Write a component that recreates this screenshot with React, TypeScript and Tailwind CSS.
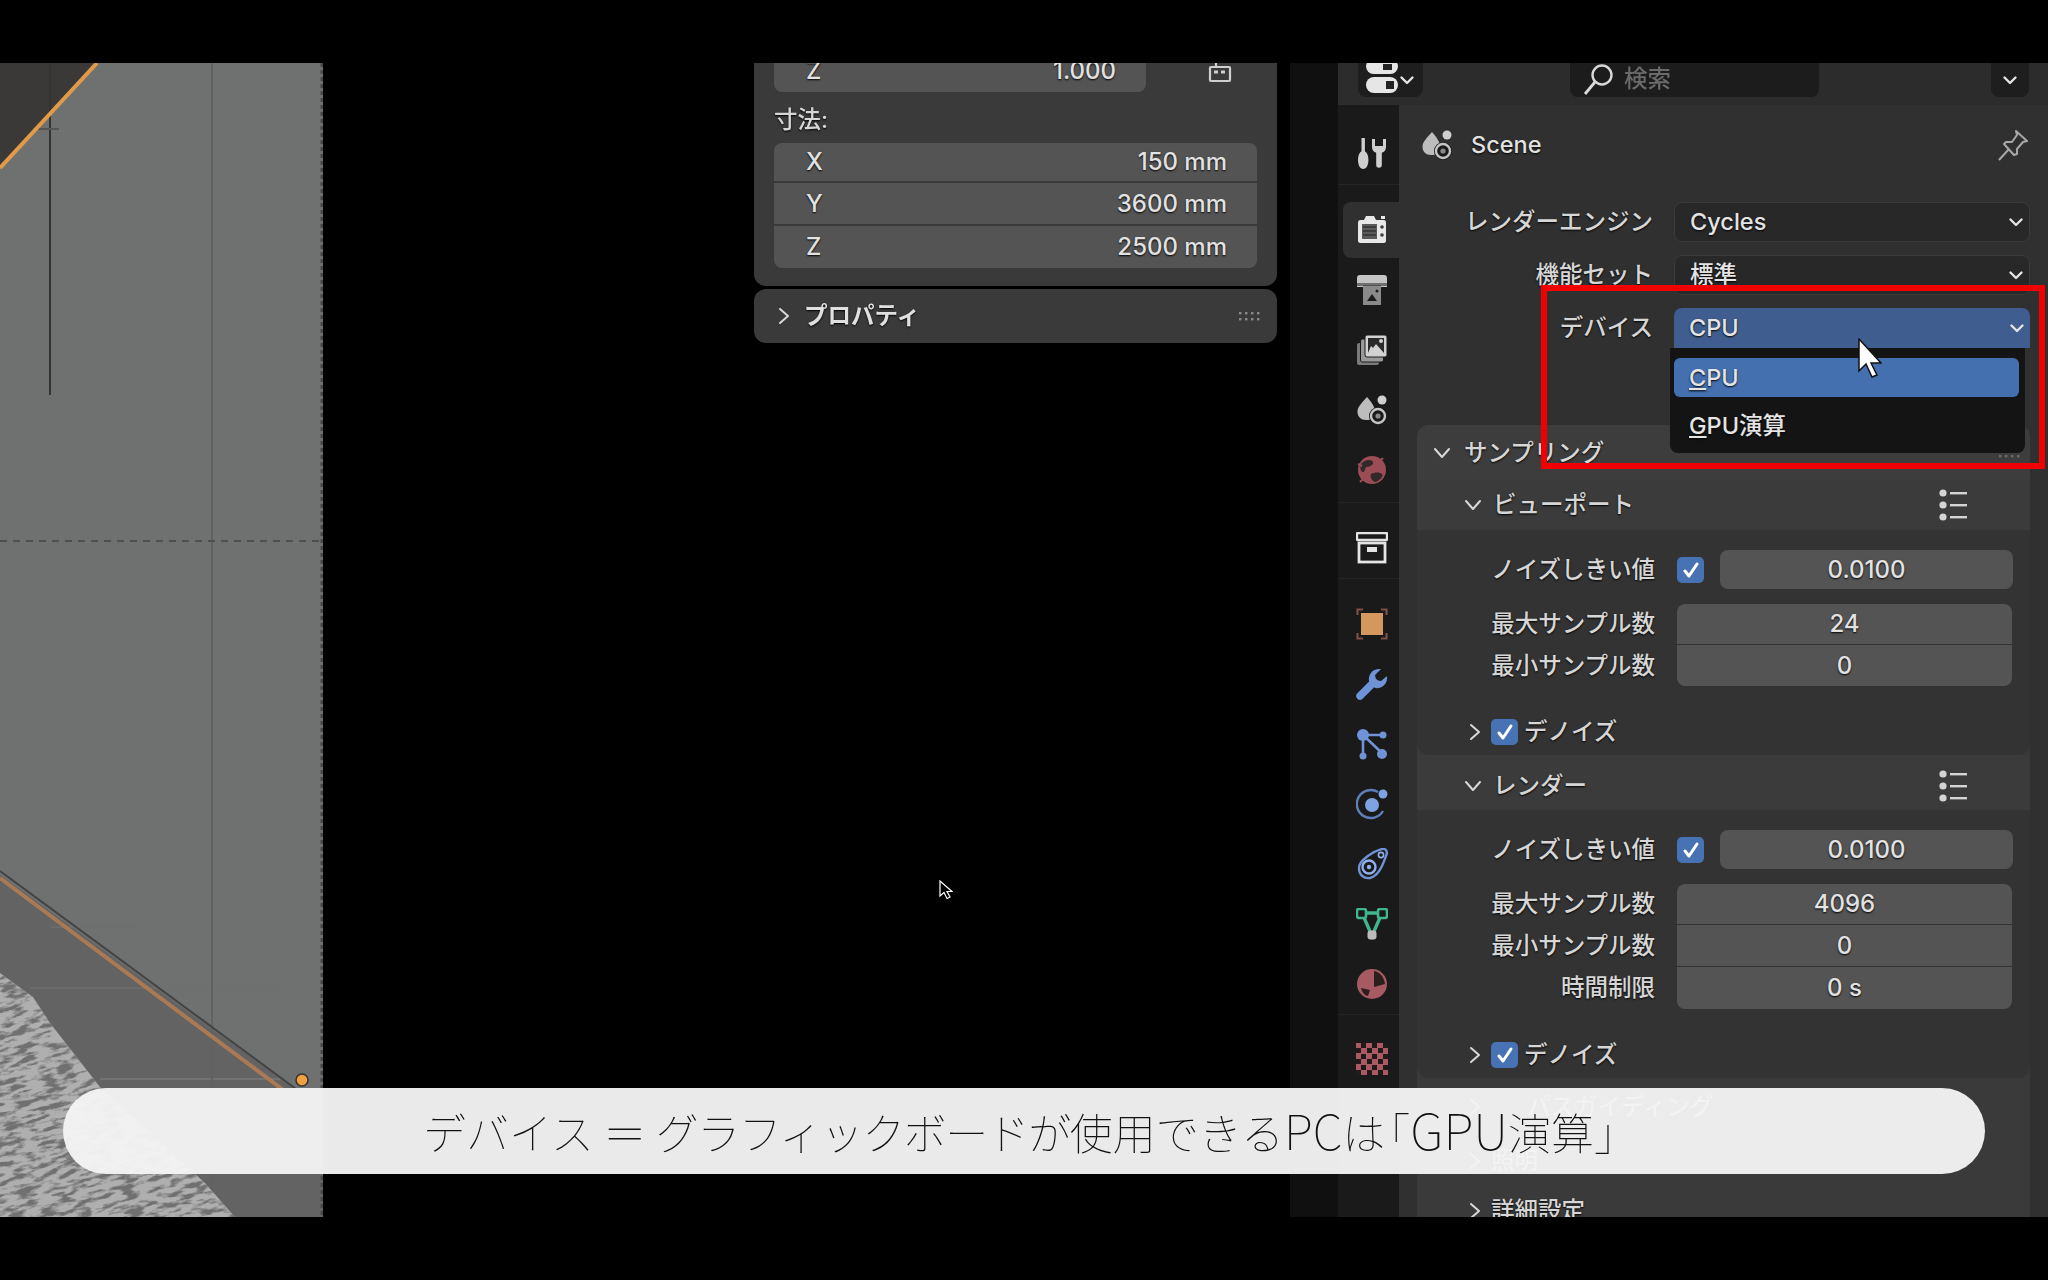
import React from "react";

const shadow = "[text-shadow:0_1px_2px_#000]";

// --- small widgets ---
function Chevron({ open = true, className = "" }: { open?: boolean; className?: string }) {
  return (
    <svg viewBox="0 0 20 20" className={`w-5 h-5 shrink-0 ${className}`} fill="none" stroke="#d8d8d8" strokeWidth="2" strokeLinecap="round" strokeLinejoin="round">
      {open ? <path d="M3 6l7 8 7-8" /> : <path d="M6 3l8 7-8 7" />}
    </svg>
  );
}

function SmallDown({ className = "" }: { className?: string }) {
  return (
    <svg viewBox="0 0 16 16" className={`w-4 h-4 shrink-0 ${className}`} fill="none" stroke="#e4e4e4" strokeWidth="2.4" strokeLinecap="round" strokeLinejoin="round">
      <path d="M2.5 5.5L8 11l5.5-5.5" />
    </svg>
  );
}

function Check() {
  return (
    <div className="w-[27px] h-[26px] shrink-0 rounded-[5px] bg-[#4772b3] flex items-center justify-center">
      <svg viewBox="0 0 20 20" className="w-5 h-5" fill="none" stroke="#fff" strokeWidth="3" strokeLinecap="round" strokeLinejoin="round">
        <path d="M4 11l4 5 8-12" />
      </svg>
    </div>
  );
}

function ListIcon() {
  return (
    <svg viewBox="0 0 28 32" className="w-[28px] h-[32px]" fill="#d4d4d4">
      <circle cx="4" cy="4" r="3.6" />
      <circle cx="4" cy="16" r="3.6" />
      <circle cx="4" cy="28" r="3.6" />
      <rect x="11" y="3" width="17" height="2.4" />
      <rect x="11" y="15" width="17" height="2.4" />
      <rect x="11" y="27" width="17" height="2.4" />
    </svg>
  );
}

function Grip({ color = "#8a8a8a" }: { color?: string }) {
  return (
    <svg viewBox="0 0 24 10" className="w-6 h-[10px]" fill={color}>
      {[1, 7, 13, 19].map((x) => (
        <g key={x}>
          <rect x={x} y="1" width="2.4" height="2.4" />
          <rect x={x} y="7" width="2.4" height="2.4" />
        </g>
      ))}
    </svg>
  );
}

function Label({ children }: { children: React.ReactNode }) {
  return <div className={`w-[238px] shrink-0 text-right text-[#d6d6d6] ${shadow}`}>{children}</div>;
}

function NumField({ value, h }: { value: string; h: string }) {
  return <div className={`${h} bg-[#545454] flex items-center justify-center text-[24px] text-[#e2e2e2] ${shadow}`}>{value}</div>;
}

function AxisField({ axis, value, h }: { axis: string; value: string; h: string }) {
  return (
    <div className={`${h} bg-[#545454] flex items-center justify-between pl-[32px] pr-[30px] text-[24px] text-[#e2e2e2] ${shadow}`}>
      <span>{axis}</span>
      <span>{value}</span>
    </div>
  );
}

function SamplingBody({ rows, tail }: { rows: { label: string; value: string; h: string }[]; tail: string }) {
  return (
    <div className={`bg-[#333333] rounded-b-xl pt-[20px] ${tail}`}>
      <div className="flex items-center h-[39px]">
        <Label>ノイズしきい値</Label>
        <div className="w-[22px] shrink-0" />
        <Check />
        <div className="w-[16px] shrink-0" />
        <div className="w-[293px] rounded-lg overflow-hidden">
          <NumField value="0.0100" h="h-[39px]" />
        </div>
      </div>
      <div className="flex mt-[15px]">
        <div className="w-[238px] shrink-0 flex flex-col gap-px">
          {rows.map((r) => (
            <div key={r.label} className={`${r.h} flex items-center justify-end text-[#d6d6d6] ${shadow}`}>
              {r.label}
            </div>
          ))}
        </div>
        <div className="w-[22px] shrink-0" />
        <div className="w-[335px] rounded-lg overflow-hidden flex flex-col gap-px">
          {rows.map((r) => (
            <NumField key={r.label} value={r.value} h={r.h} />
          ))}
        </div>
      </div>
      <div className={`flex items-center h-[47px] mt-[22px] pl-[48px] text-[#d6d6d6] ${shadow}`}>
        <Chevron open={false} />
        <div className="w-[6px]" />
        <Check />
        <span className="ml-[6px]">デノイズ</span>
      </div>
    </div>
  );
}

function SubHeader({ title, h }: { title: string; h: string }) {
  return (
    <div className={`${h} bg-[#3b3b3b] flex items-center pl-[46px] pr-[63px] text-[#d6d6d6] ${shadow}`}>
      <Chevron />
      <span className="ml-[10px] flex-1">{title}</span>
      <ListIcon />
    </div>
  );
}

// --- property tab icons, 32x32 ---
function Icon({ children }: { children: React.ReactNode }) {
  return (
    <svg viewBox="0 0 32 32" className="w-8 h-8">
      {children}
    </svg>
  );
}

const sceneShapes = (
  <>
    <path d="M11 3c4 5 8 9 8 15a8 8 0 0 1-5 7.500c-1 .5-3 .5-4 .5-5 0-8.500-3.500-8.500-8C1.500 12 7 8 11 3z" fill="#bdbdbd" />
    <circle cx="26" cy="6" r="4.500" fill="#cfcfcf" />
    <circle cx="22" cy="22" r="9" fill="#1a1a1a" />
    <circle cx="22" cy="22" r="7" fill="none" stroke="#c4c4c4" strokeWidth="2.400" />
    <circle cx="22" cy="22" r="2.600" fill="#8a8a8a" />
  </>
);

const tabIcons: Record<string, React.ReactNode> = {
  tools: (
    <Icon>
      <rect x="5.5" y="0" width="3.4" height="15" fill="#cfcfcf" />
      <path d="M7.2 13c3.4 0 5.2 4 5.2 9 0 5-2 9-5.2 9S2 27 2 22c0-5 1.800-9 5.200-9z" fill="#cfcfcf" />
      <path d="M16 1v8c0 3 1.600 5 4.200 5.800V27a2.800 2.800 0 0 0 5.600 0V14.800C28.400 14 30 12 30 9V1l-3 0v7h-8V1z" fill="#cfcfcf" />
    </Icon>
  ),
  render: (
    <Icon>
      <path d="M8 7l2-4h8l2 4z" fill="#e8e8e8" />
      <rect x="25" y="3" width="4" height="3" fill="#e8e8e8" />
      <rect x="2" y="7" width="28" height="23" rx="2.500" fill="#e8e8e8" />
      <rect x="6" y="11" width="15" height="15" fill="#5a5a5a" />
      <path d="M7 14h13M7 18h13M7 22h13" stroke="#333" strokeWidth="1.600" />
      <circle cx="26" cy="14" r="1.800" fill="#3c3c3c" />
      <circle cx="26" cy="22" r="1.800" fill="#3c3c3c" />
    </Icon>
  ),
  output: (
    <Icon>
      <path d="M4 1h24a3 3 0 0 1 3 3v9H1V4a3 3 0 0 1 3-3z" fill="#c4c4c4" />
      <rect x="7" y="11" width="18" height="20" fill="#8a8a8a" />
      <rect x="1" y="9" width="30" height="3" fill="#1a1a1a" opacity="0.5" />
      <path d="M11 27l5-7 5 7z" fill="#1d1d1d" />
      <circle cx="21" cy="17" r="1.500" fill="#1d1d1d" />
    </Icon>
  ),
  layer: (
    <Icon>
      <rect x="1" y="9" width="22" height="22" rx="2" fill="#7a7a7a" />
      <rect x="4.500" y="5" width="23" height="23" rx="2" fill="#999" stroke="#1a1a1a" />
      <rect x="9" y="1" width="22" height="22" rx="2" fill="#d2d2d2" stroke="#1a1a1a" />
      <path d="M12 19V4h16v15l-8-9-3 4-2-2z" fill="#2a2a2a" />
      <circle cx="25" cy="7" r="2" fill="#d2d2d2" />
    </Icon>
  ),
  scene: <Icon>{sceneShapes}</Icon>,
  world: (
    <Icon>
      <circle cx="16" cy="16" r="14" fill="#9a4d55" />
      <path d="M7 8c5-3 9-2 10 0s-3 5-6 5-1 5-4 5-4-7 0-10zM15 20c4-2 9-2 11 0s-3 7-6 8-7-6-5-8z" fill="#33292a" />
      <path d="M4 28l5-5M27 4l-4 4M2 10l4 2" stroke="#9a4d55" strokeWidth="2" />
    </Icon>
  ),
  collection: (
    <Icon>
      <rect x="1" y="1" width="30" height="7" rx="1" fill="none" stroke="#e4e4e4" strokeWidth="2.400" />
      <rect x="3" y="11" width="26" height="19" fill="none" stroke="#e4e4e4" strokeWidth="2.800" />
      <rect x="11" y="15" width="10" height="5" fill="#e4e4e4" />
    </Icon>
  ),
  object: (
    <Icon>
      <rect x="5" y="5" width="22" height="22" fill="#d4975c" />
      <path d="M1.500 7V1.500H7M25 1.500h5.500V7M30.500 25v5.500H25M7 30.500H1.500V25" fill="none" stroke="#7a5048" strokeWidth="2.200" />
    </Icon>
  ),
  modifier: (
    <Icon>
      <path d="M4 28L18 14" stroke="#6f93d6" strokeWidth="7.500" strokeLinecap="round" />
      <path d="M13 13C12 6 17 0 25 1l-6 6 1 5 5 1 6-5c1 8-5 13-12 12z" fill="#6f93d6" />
    </Icon>
  ),
  particles: (
    <Icon>
      <path d="M7 7h21M7 7v22M7 7l20 19" stroke="#6f93d6" strokeWidth="2.600" />
      <circle cx="7" cy="7" r="6" fill="#6f93d6" />
      <circle cx="27" cy="7" r="3.500" fill="#6f93d6" />
      <circle cx="7" cy="28" r="3.500" fill="#6f93d6" />
      <circle cx="26" cy="26" r="5" fill="#6f93d6" />
    </Icon>
  ),
  physics: (
    <Icon>
      <path d="M27 23a14 14 0 1 1-5-19" fill="none" stroke="#5f7fb8" strokeWidth="2.400" />
      <circle cx="16" cy="17" r="7" fill="#7fa2e4" />
      <circle cx="27" cy="6" r="4.500" fill="#7fa2e4" />
    </Icon>
  ),
  constraint: (
    <Icon>
      <path d="M3 20C3 12 18 3 26 1c4-1 6 3 4 7-3 8-7 20-16 22C8 31 3 27 3 20z" fill="none" stroke="#6f93d6" strokeWidth="2.400" />
      <circle cx="13" cy="19" r="6.500" fill="none" stroke="#8fb0ea" strokeWidth="2.400" />
      <circle cx="13" cy="19" r="2.200" fill="#8fb0ea" />
      <circle cx="25" cy="7" r="2.600" fill="none" stroke="#8fb0ea" strokeWidth="1.600" />
    </Icon>
  ),
  data: (
    <Icon>
      <path d="M6 5h20L16 28z" fill="none" stroke="#3fb68f" strokeWidth="3.400" />
      <rect x="1" y="1" width="9" height="9" rx="2" fill="#1a1a1a" stroke="#3fb68f" strokeWidth="2.600" />
      <rect x="22" y="1" width="9" height="9" rx="2" fill="#1a1a1a" stroke="#3fb68f" strokeWidth="2.600" />
      <rect x="12" y="23" width="8" height="8" rx="2" fill="#bcbcbc" stroke="#bcbcbc" />
    </Icon>
  ),
  material: (
    <Icon>
      <circle cx="16" cy="16" r="15" fill="#a85a62" />
      <path d="M18 3c6 1 10 6 11 13l-11 3z" fill="#2a1e1f" />
      <path d="M5 20l9 2-2 6c-4-1-6-4-7-8z" fill="#2a1e1f" />
    </Icon>
  ),
  texture: (
    <Icon>
      <rect x="0" y="0" width="32" height="32" fill="#ab5a64" />
      {[
        [5, 0], [16, 0], [27, 0],
        [0, 5], [11, 5], [22, 5],
        [5, 11], [16, 11], [27, 11],
        [0, 16], [11, 16], [22, 16],
        [5, 22], [16, 22], [27, 22],
        [0, 27], [11, 27], [22, 27],
      ].map(([x, y]) => (
        <rect key={`${x}-${y}`} x={x} y={y} width="5" height="5" fill="#211a1b" />
      ))}
    </Icon>
  ),
};

function Tab({ name, className = "" }: { name: string; className?: string }) {
  return <div className={`h-[60px] pl-[6px] flex items-center justify-center ${className}`}>{tabIcons[name]}</div>;
}

function Viewport() {
  return (
    <div className="w-[323px] shrink-0 h-full">
      <svg viewBox="0 0 323 1154" className="w-full h-full block">
        <defs>
          <clipPath id="rock">
            <path d="M0 910L33 934L50 960L100 1024L205 1120L235 1154L0 1154Z" />
          </clipPath>
          <filter id="streaks" x="0" y="0" width="100%" height="100%" colorInterpolationFilters="sRGB">
            <feTurbulence type="fractalNoise" baseFrequency="0.06 0.2" numOctaves="4" seed="11" />
            <feColorMatrix values="0 0 0 0 0.44  0 0 0 0 0.44  0 0 0 0 0.44  5 0 0 0 -2.25" />
          </filter>
        </defs>
        <rect width="323" height="1154" fill="#6f7171" />
        <path d="M0 105L97 0L0 0Z" fill="#3a3938" />
        <path d="M0 812L300 1030L323 1040L323 1154L0 1154Z" fill="#636363" />
        <path d="M50 864H140M100 925H280M30 925H100" stroke="#6f6f6f" strokeWidth="1.500" />
        <path d="M100 1016H280" stroke="#777" strokeWidth="1.500" />
        <path d="M212 0V1154" stroke="#606262" strokeWidth="2" />
        <path d="M0 478H320" stroke="#444" strokeWidth="1.500" strokeDasharray="7 6" />
        <path d="M50 0V332" stroke="#333" strokeWidth="2" />
        <path d="M33 66H59" stroke="#555" strokeWidth="2" />
        <path d="M0 105L97 0" stroke="#e39a48" strokeWidth="4" />
        <path d="M0 808L296 1026" stroke="#434343" strokeWidth="2" />
        <path d="M0 815L282 1026" stroke="#a97a55" strokeWidth="4" />
        <circle cx="302" cy="1017" r="6" fill="#f0a040" stroke="#333" strokeWidth="1.500" />
        <g clipPath="url(#rock)">
          <rect width="323" height="1154" fill="#afafaf" />
          <g transform="rotate(-14 120 1040)">
            <rect x="-120" y="860" width="520" height="360" filter="url(#streaks)" />
          </g>
        </g>
        <path d="M322 0V1154" stroke="#4a4a4a" strokeWidth="3" strokeDasharray="4 3" />
      </svg>
    </div>
  );
}

function SidePanel() {
  return (
    <div className="w-[523px] shrink-0 flex flex-col gap-[3px]">
      <div className="h-[223px] bg-[#3a3a3a] rounded-b-xl overflow-hidden px-[20px]">
        <div className="flex items-center -mt-[13px]">
          <div className="w-[372px] rounded-b-lg overflow-hidden">
            <AxisField axis="Z" value="1.000" h="h-[42px]" />
          </div>
          <svg viewBox="0 0 30 30" className="w-[30px] h-[30px] ml-[56px] -mt-[2px]" fill="none" stroke="#cfcfcf" strokeWidth="2.200">
            <rect x="8" y="12" width="20" height="14" rx="1" />
            <path d="M12 17h4M19 17h4" strokeWidth="3" />
            <path d="M14 12V7" />
            <circle cx="3" cy="5" r="1.200" fill="#cfcfcf" stroke="none" />
          </svg>
        </div>
        <div className={`h-[51px] pt-[5px] flex items-center text-[#d6d6d6] ${shadow}`}>寸法:</div>
        <div className="rounded-lg overflow-hidden flex flex-col gap-[2px]">
          <AxisField axis="X" value="150 mm" h="h-[38px]" />
          <AxisField axis="Y" value="3600 mm" h="h-[41px]" />
          <AxisField axis="Z" value="2500 mm" h="h-[42px]" />
        </div>
      </div>
      <div className={`h-[54px] bg-[#3a3a3a] rounded-xl flex items-center pl-[20px] pr-[15px] text-[#e0e0e0] ${shadow}`}>
        <Chevron open={false} />
        <span className="ml-[10px] flex-1 font-semibold">プロパティ</span>
        <Grip />
      </div>
    </div>
  );
}

function SelectRow({ label, value, active, children }: { label: string; value: string; active?: boolean; children?: React.ReactNode }) {
  return (
    <div className="flex items-center h-[40px]">
      <div className={`w-[236px] shrink-0 text-right text-[#d6d6d6] ${shadow}`}>{label}</div>
      <div className="w-[21px] shrink-0" />
      <div className={`relative w-[356px] h-[40px] ${active ? "bg-[#3f5e8f]" : "bg-[#282828] border border-[#3a3a3a]"} rounded-t-lg ${active ? "" : "rounded-b-lg"} flex items-center pl-[15px] pr-[5px] text-[#e4e4e4] ${shadow}`}>
        <span className="flex-1">{value}</span>
        <SmallDown />
        {children}
      </div>
    </div>
  );
}

function PropertiesEditor() {
  return (
    <div className="flex-1 h-full flex">
      <div className="w-[48px] shrink-0 bg-[#101010]" />
      <div className="flex-1 flex flex-col">
        {/* header */}
        <div className="h-[42px] shrink-0 bg-[#2c2c2c] flex items-start pl-[20px]">
          <div className="w-[65px] h-[34px] bg-[#1e1e1e] rounded-b-lg overflow-hidden flex items-center pl-[8px] gap-[1px]">
            <svg viewBox="0 0 32 34" className="w-8 h-[34px]">
              <rect x="0" y="-4" width="32" height="15" rx="7.500" fill="#e6e6e6" />
              <rect x="17" y="1" width="9" height="6" fill="#222" />
              <rect x="0" y="14" width="32" height="16" rx="8" fill="#e6e6e6" />
              <rect x="20" y="18" width="8" height="8" fill="#222" />
            </svg>
            <SmallDown />
          </div>
          <div className="w-[249px] h-[34px] ml-[147px] pb-[3px] bg-[#1c1c1c] rounded-b-lg flex items-center pl-[12px] text-[#6a6a6a]">
            <svg viewBox="0 0 32 32" className="w-8 h-8" fill="none" stroke="#d8d8d8" strokeWidth="2.400">
              <circle cx="20" cy="12" r="9.500" />
              <path d="M13 19L3 31" strokeWidth="2.800" />
            </svg>
            <span className="ml-[10px]">検索</span>
          </div>
          <div className="w-[38px] h-[34px] ml-[172px] bg-[#1e1e1e] rounded-b-lg flex items-center justify-center">
            <SmallDown />
          </div>
        </div>

        <div className="flex-1 flex min-h-0">
          {/* property tabs */}
          <div className="w-[61px] shrink-0 bg-[#1a1a1a] flex flex-col pt-[19px]">
            <Tab name="tools" />
            <div className="h-px bg-[#242424] mb-[17px]" />
            <div className="h-[56px] ml-[5px] bg-[#303030] rounded-l-lg flex items-center justify-center pl-[1px] pb-[2px]">{tabIcons.render}</div>
            <Tab name="output" className="mt-[2px]" />
            <Tab name="layer" />
            <Tab name="scene" />
            <Tab name="world" />
            <div className="h-px bg-[#242424] mt-[2px] mb-[15px]" />
            <Tab name="collection" />
            <div className="h-px bg-[#242424] mb-[15px]" />
            <Tab name="object" />
            <Tab name="modifier" />
            <Tab name="particles" />
            <Tab name="physics" />
            <Tab name="constraint" />
            <Tab name="data" />
            <Tab name="material" />
            <div className="h-px bg-[#242424] mb-[14px]" />
            <Tab name="texture" />
          </div>

          {/* main column */}
          <div className="flex-1 min-w-0 bg-[#303030] pl-[18px] pr-[18px] flex flex-col">
            <div className="h-[46px] mt-[17px] mb-[34px] shrink-0 flex items-center pl-[4px]">
              <svg viewBox="0 0 32 32" className="w-8 h-8">{sceneShapes}</svg>
              <span className={`ml-[18px] flex-1 text-[#e2e2e2] ${shadow}`}>Scene</span>
              <svg viewBox="0 0 32 32" className="w-8 h-8 mr-[1px]" fill="none" stroke="#a8a8a8" strokeWidth="2" strokeLinejoin="round">
                <path d="M19 2l11 10-4 1-6 7 0 5-3 1-10-11 2-2 6 0 5-7z" />
                <path d="M12 20L2 31" />
              </svg>
            </div>

            <div className="flex flex-col gap-[13px] shrink-0">
              <SelectRow label="レンダーエンジン" value="Cycles" />
              <SelectRow label="機能セット" value="標準" />
              <SelectRow label="デバイス" value="CPU" active>
                <div className="absolute left-[-4px] top-[40px] w-[355px] h-[105px] z-10 bg-[#141414] rounded-b-lg pt-[10px] text-[#e4e4e4]">
                  <div className="ml-[4px] w-[345px] h-[39px] bg-[#4570b0] rounded-md flex items-center pl-[15px]">
                    <span>
                      <span className="underline">C</span>PU
                    </span>
                  </div>
                  <div className="ml-[4px] mt-[9px] h-[39px] flex items-center pl-[15px]">
                    <span>
                      <span className="underline">G</span>PU演算
                    </span>
                  </div>
                </div>
              </SelectRow>
            </div>

            {/* サンプリング panel */}
            <div className="mt-[77px] flex-1 min-h-0 bg-[#3a3a3a] rounded-t-xl overflow-hidden">
              <div className={`h-[55px] bg-[#3d3d3d] flex items-center pl-[15px] pr-[8px] text-[#d6d6d6] ${shadow}`}>
                <Chevron />
                <span className="ml-[12px] flex-1">サンプリング</span>
                <Grip color="#6a6a6a" />
              </div>
              <SubHeader title="ビューポート" h="h-[50px]" />
              <SamplingBody
                tail="h-[225px]"
                rows={[
                  { label: "最大サンプル数", value: "24", h: "h-[40px]" },
                  { label: "最小サンプル数", value: "0", h: "h-[41px]" },
                ]}
              />
              <SubHeader title="レンダー" h="h-[55px] pt-[6px]" />
              <SamplingBody
                tail="h-[268px]"
                rows={[
                  { label: "最大サンプル数", value: "4096", h: "h-[40px]" },
                  { label: "最小サンプル数", value: "0", h: "h-[41px]" },
                  { label: "時間制限", value: "0 s", h: "h-[42px]" },
                ]}
              />
              <div className={`pl-[48px] text-[#d6d6d6] ${shadow}`}>
                <div className="h-[58px] flex items-center">
                  <Chevron open={false} />
                  <span className="ml-[42px]">パスガイディング</span>
                </div>
                <div className="h-[50px] flex items-center">
                  <Chevron open={false} />
                  <span className="ml-[6px]">照明</span>
                </div>
                <div className="h-[50px] flex items-center">
                  <Chevron open={false} />
                  <span className="ml-[6px]">詳細設定</span>
                </div>
              </div>
            </div>
          </div>
        </div>
      </div>
    </div>
  );
}

export default function App() {
  return (
    <div className="relative w-[2048px] h-[1280px] bg-black overflow-hidden font-['Inter','Noto_Sans_CJK_JP',sans-serif] font-medium text-[23.5px]">
      <div className="pt-[63px]">
        <div className="h-[1154px] flex overflow-hidden blur-[0.6px]">
          <Viewport />
          <div className="w-[431px] shrink-0" />
          <SidePanel />
          <div className="w-[13px] shrink-0" />
          <PropertiesEditor />
        </div>
      </div>

      {/* mouse cursors */}
      <svg viewBox="0 0 24 40" className="absolute left-[1858px] top-[338px] w-[24px] h-[40px]" fill="#fff" stroke="#111" strokeWidth="1.500">
        <path d="M1 1v32l7-7 6 13 5-2-6-12h10z" />
      </svg>
      <svg viewBox="0 0 14 20" className="absolute left-[939px] top-[880px] w-[14px] h-[20px]" fill="#000" stroke="#fff" strokeWidth="1.200">
        <path d="M1 1v15l4-3.500 3 6 3-1.500-3-5.500h5z" />
      </svg>

      {/* red highlight */}
      <div className="absolute left-[1541px] top-[285px] w-[504px] h-[184px] border-[6px] border-[#f00000]" />

      {/* caption */}
      <div className="absolute left-[63px] top-[1088px] w-[1922px] h-[86px] pb-[5px] pl-[12px] rounded-[43px] bg-[#f4f4f4]/[0.96] flex items-center justify-center font-['Noto_Sans_CJK_JP',sans-serif] font-thin text-[43px] text-[#111111]">
        <div className="whitespace-nowrap">
          デバイス ＝ <span className="tracking-[-1.5px]">グラフィックボードが</span>使用できる
          <span className="text-[48px]">PC</span>は<span className="-ml-[18px]">「</span>
          <span className="text-[50px]">GPU</span>演算」
        </div>
      </div>
    </div>
  );
}
